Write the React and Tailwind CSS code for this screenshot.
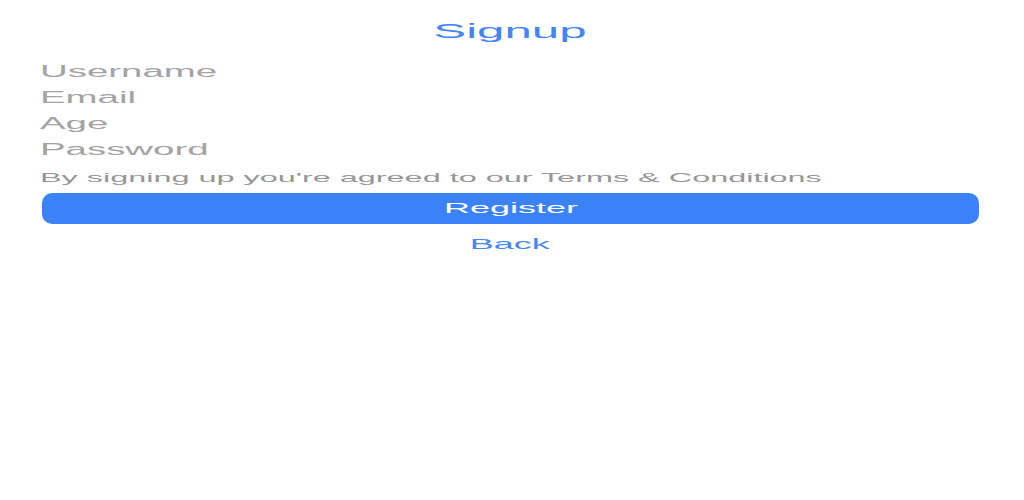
import React from 'react';

const fields = ['Username', 'Email', 'Age', 'Password'];

function Stretch({ children, className = '' }) {
  return <span className={`inline-block scale-x-[2.4] whitespace-nowrap ${className}`}>{children}</span>;
}

export default function App() {
  return (
    <div className="min-h-[500px] w-full bg-white font-['Liberation_Sans',Arial,sans-serif]">
      <div className="flex flex-col pl-[40px] pr-[45px] pt-[17px]">
        <div className="flex h-[28px] items-center justify-center text-[20.5px] text-[#4684ee]">
          <Stretch className="origin-center">Signup</Stretch>
        </div>

        <div className="mt-[14px] flex flex-col">
          {fields.map((f) => (
            <div key={f} className="flex h-[26px] items-center text-[16px] text-[#a3a3a3]">
              <Stretch className="origin-left">{f}</Stretch>
            </div>
          ))}
        </div>

        <div className="mt-[5px] flex h-[20px] items-center text-[13.5px] text-[#969696]">
          <Stretch className="origin-left">By signing up you're agreed to our Terms &amp; Conditions</Stretch>
        </div>

        <button className="ml-[2px] mt-[5px] flex h-[31px] items-center justify-center rounded-[10px] bg-[#3b82f6] text-[15px] text-white">
          <Stretch className="origin-center">Register</Stretch>
        </button>

        <div className="mt-[10px] flex h-[20px] items-center justify-center text-[15px] text-[#4a86e8]">
          <Stretch className="origin-center">Back</Stretch>
        </div>
      </div>
    </div>
  );
}
